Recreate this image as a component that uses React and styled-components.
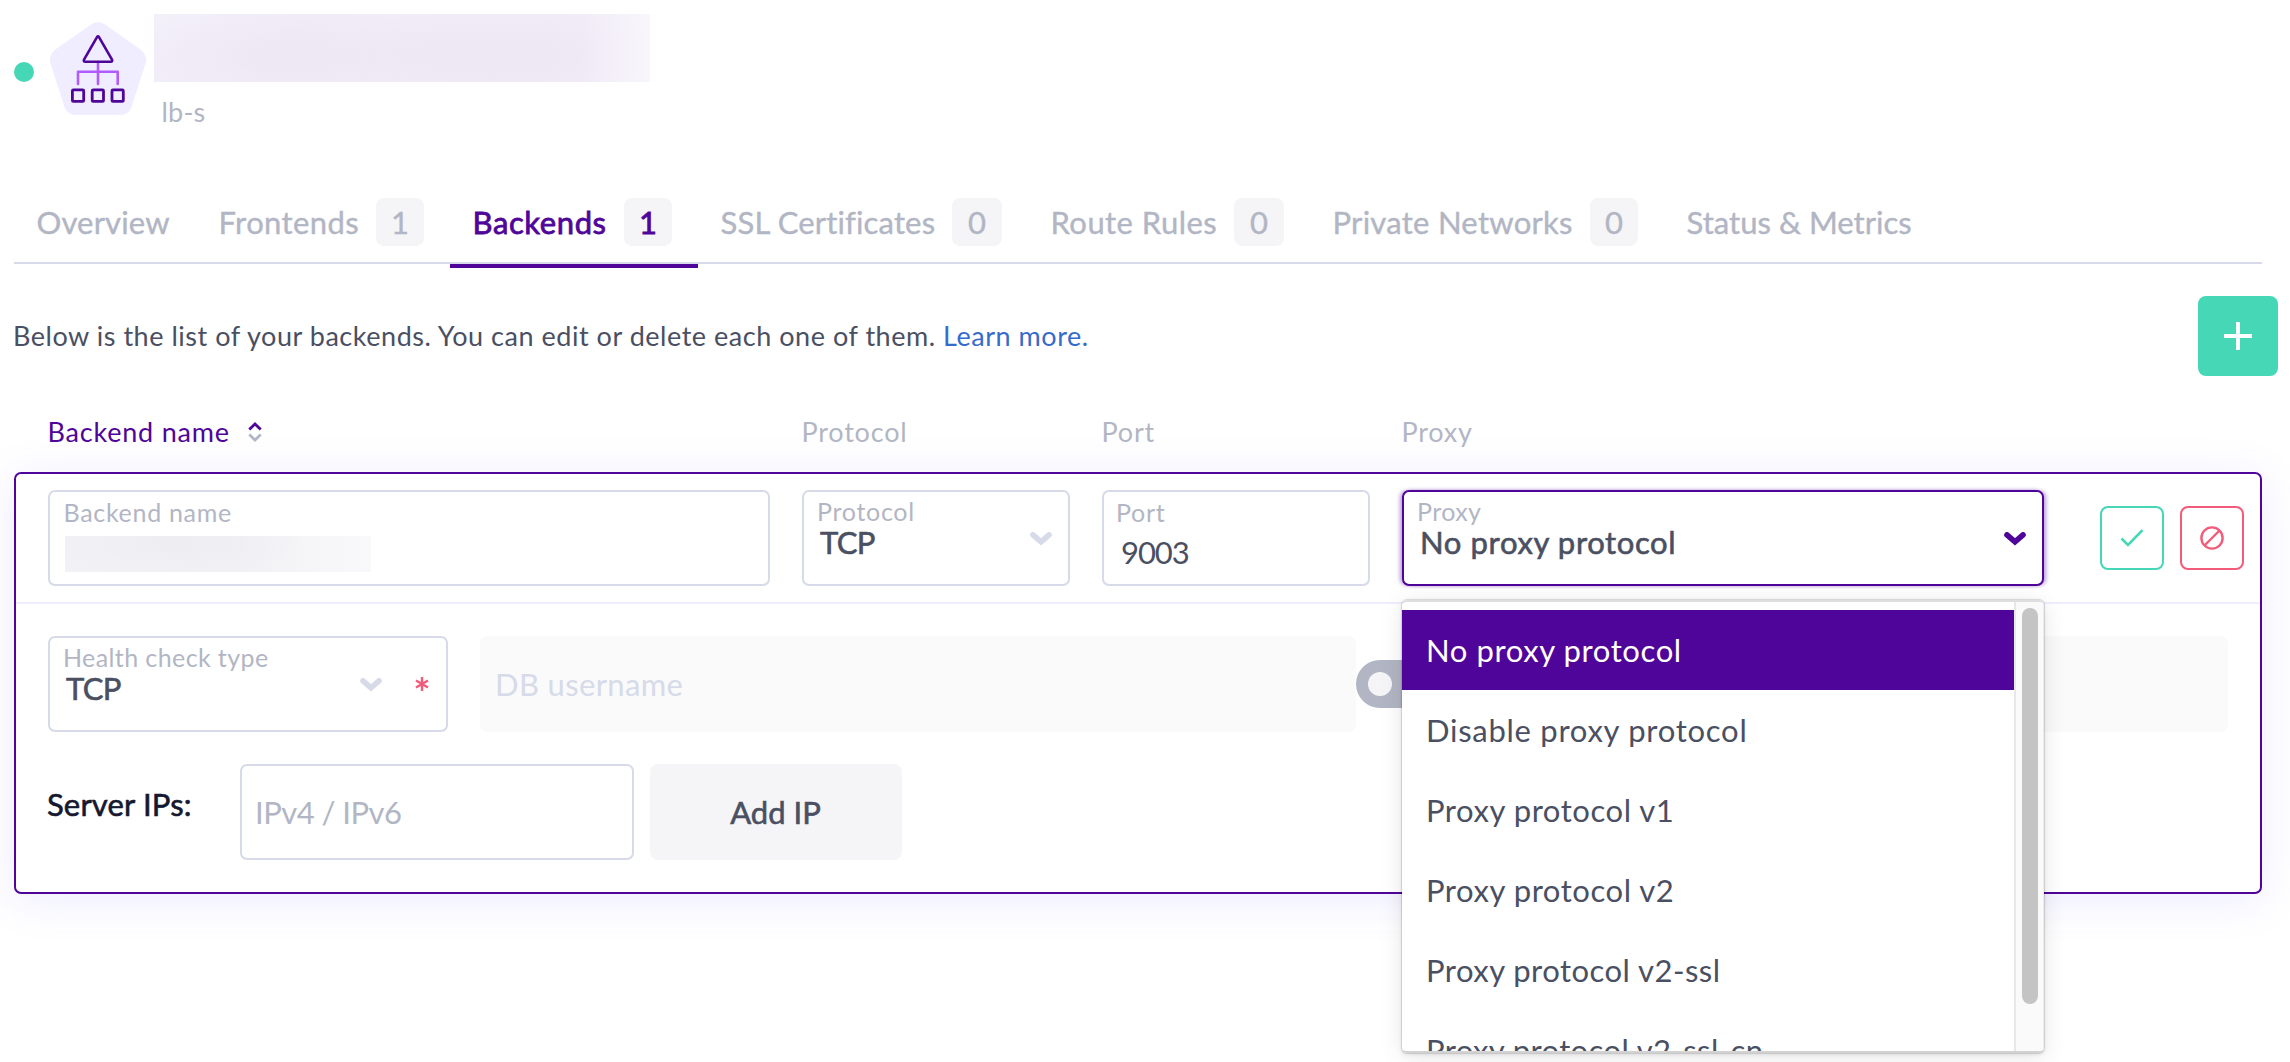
import React from 'react';
import styled, { createGlobalStyle, css } from 'styled-components';

const c = {
  purple: '#4f0599',
  violet: '#b05cff',
  lilac: '#efedff',
  teal: '#46d7b6',
  red: '#f25c7a',
  gray: '#b2b6c4',
  line: '#d6dae9',
  text: '#4a4f62',
  soft: '#f5f5f8',
  faint: '#fafafa',
};

const GlobalStyle = createGlobalStyle`
  *, *::before, *::after { box-sizing: border-box; }
  body {
    margin: 0;
    height: 1062px;
    overflow: hidden;
    background: #fff;
    color: ${c.text};
    font: 31px/34px Lato, "Liberation Sans", sans-serif;
    white-space: nowrap;
  }
`;

const medium = css`
  -webkit-text-stroke: 0.6px currentColor;
`;

const Page = styled.main`
  width: 2290px;
  height: 1062px;
  padding-left: 14px;
  overflow: hidden;
`;

/* ---- header ---- */
const Header = styled.header`
  display: flex;
  align-items: flex-start;
  height: 182px;
  padding-top: 14px;
`;
const StatusDot = styled.span`
  width: 20px;
  height: 20px;
  margin: 48px 16px 0 0;
  border-radius: 50%;
  background: ${c.teal};
`;
const Logo = styled.svg`
  width: 96px;
  height: 94px;
  margin: 8px 8px 0 0;
`;
const Heading = styled.div`
  display: flex;
  flex-direction: column;
`;
const HiddenTitle = styled.div`
  width: 496px;
  height: 68px;
  background:
    linear-gradient(90deg, transparent 86%, rgba(249, 247, 252, 0.8) 99%),
    radial-gradient(ellipse 170px 50px at 28% 62%, #ede7f4, transparent),
    radial-gradient(ellipse 170px 50px at 69% 62%, #ede6f3, transparent),
    linear-gradient(135deg, #f3f0fa, #f1ecf7 30%, #f1ecf7);
`;
const Subtitle = styled.div`
  margin: 13px 0 0 7.5px;
  color: ${c.gray};
  font-size: 27px;
  letter-spacing: 0.2px;
`;

/* ---- tabs ---- */
const Tabs = styled.nav`
  display: flex;
  width: 2248px;
  height: 82px;
  border-bottom: 2px solid ${c.line};
`;
const Tab = styled.div`
  position: relative;
  display: flex;
  align-items: center;
  width: ${(p) => p.$width}px;
  padding: 0 26px 0 22.5px;
  color: ${(p) => (p.$active ? c.purple : c.gray)};
  letter-spacing: ${(p) => p.$track}px;
  -webkit-text-stroke: ${(p) => (p.$active ? 0.8 : 0.4)}px currentColor;
  ${(p) =>
    p.$active &&
    css`
      &::after {
        content: '';
        position: absolute;
        left: 0;
        right: 0;
        bottom: -6px;
        height: 4px;
        background: ${c.purple};
      }
    `}
`;
const Count = styled.span`
  display: flex;
  align-items: center;
  justify-content: center;
  width: ${(p) => (p.$wide ? 50 : 48)}px;
  height: 48px;
  margin-left: auto;
  border-radius: 8px;
  background: ${c.soft};
  letter-spacing: 0;
`;

/* ---- intro ---- */
const Intro = styled.div`
  display: flex;
  align-items: center;
  justify-content: space-between;
  width: 2264px;
  margin-top: 32px;
`;
const IntroText = styled.p`
  margin: 0 0 0 -1px;
  font-size: 27px;
  letter-spacing: 0.53px;
`;
const Link = styled.a`
  color: #366bcc;
`;
const AddButton = styled.button`
  display: flex;
  align-items: center;
  justify-content: center;
  width: 80px;
  height: 80px;
  border: 0;
  border-radius: 8px;
  background: ${c.teal};
`;

/* ---- table ---- */
const HeadRow = styled.div`
  display: flex;
  align-items: center;
  gap: 32px;
  height: 96px;
  padding: 15px 0 0 33.5px;
  font-size: 27px;
  letter-spacing: 0.8px;
`;
const HeadCell = styled.div`
  display: flex;
  align-items: center;
  gap: 18px;
  width: ${(p) => p.$width}px;
  color: ${(p) => (p.$sorted ? c.purple : c.gray)};
`;
const Card = styled.section`
  width: 2248px;
  height: 422px;
  border: 2px solid ${c.purple};
  border-radius: 7px;
  background: #fff;
  box-shadow: 0 6px 44px rgba(110, 100, 255, 0.13);
`;
const MainRow = styled.div`
  display: flex;
  align-items: flex-start;
  gap: 32px;
  height: 130px;
  padding: 16px 16px 0 32px;
  border-bottom: 2px solid ${c.lilac};
`;
const FieldWrap = styled.div`
  position: relative;
  width: ${(p) => p.$width}px;
`;
const Field = styled.div`
  display: flex;
  align-items: center;
  height: 96px;
  padding: 0 ${(p) => p.$right || 16}px 0 ${(p) => p.$left || 13}px;
  border: 2px solid ${(p) => (p.$open ? c.purple : c.line)};
  border-radius: 7px;
  background: #fff;
  box-shadow: ${(p) => (p.$open ? '-3px 0 4px -1px rgba(79,5,153,.4), 3px 0 4px -1px rgba(79,5,153,.4)' : 'none')};
`;
const FieldText = styled.div`
  flex: 1;
  align-self: flex-start;
  padding-top: ${(p) => (p.$input ? 6 : 5)}px;
`;
const Label = styled.div`
  color: ${c.gray};
  font-size: 25px;
  line-height: 28px;
  letter-spacing: ${(p) => p.$track || 0.7}px;
`;
const Value = styled.div`
  padding-left: 3px;
  letter-spacing: ${(p) => p.$track || 0}px;
  ${medium}
`;
const InputValue = styled.div`
  padding: 9px 0 0 5px;
  letter-spacing: -1.1px;
`;
const HiddenValue = styled.div`
  width: 306px;
  height: 36px;
  margin-top: 10px;
  margin-left: 1px;
  background:
    radial-gradient(ellipse 130px 34px at 36% 20%, #eeedf2, transparent),
    linear-gradient(90deg, #f2f1f5, #f1f1f4 55%, #f9f9fb);
`;
const Required = styled.svg`
  width: 14px;
  height: 16px;
  margin-left: 33.5px;
`;
const Actions = styled.div`
  display: flex;
  gap: 16px;
  margin: 16px 0 0 24px;
`;
const IconButton = styled.button`
  display: flex;
  align-items: center;
  justify-content: center;
  width: 64px;
  height: 64px;
  padding: 0;
  border: 2px solid ${(p) => p.$tone};
  border-radius: 8px;
  background: #fff;
  color: ${(p) => p.$tone};
`;

/* ---- dropdown ---- */
const Menu = styled.div`
  position: absolute;
  z-index: 2;
  top: 110px;
  left: 0;
  display: flex;
  width: 642px;
  height: 453px;
  border-top: 2px solid #dedede;
  border-bottom: 2px solid #d2d2d2;
  border-radius: 5px;
  background: #fff;
  overflow: hidden;
`;
const MenuShade = styled.div`
  position: absolute;
  z-index: 1;
  top: 110px;
  left: 0;
  width: 642px;
  height: 453px;
  border-radius: 5px;
  box-shadow: 0 0 0 1px rgba(0, 0, 0, 0.1), 0 4px 24px rgba(0, 0, 0, 0.1), 0 1px 4px rgba(0, 0, 0, 0.12);
`;
const Options = styled.div`
  flex: 1;
  padding-top: 8px;
`;
const Option = styled.div`
  height: 80px;
  padding-left: 24px;
  line-height: 80px;
  letter-spacing: ${(p) => p.$track}px;
  color: ${(p) => (p.$selected ? '#fff' : c.text)};
  background: ${(p) => (p.$selected ? c.purple : '#fff')};
`;
const Scrollbar = styled.div`
  width: 30px;
  padding: 6px 0 0 6px;
  border-left: 2px solid #e8e8e8;
  border-right: 1px solid #ececec;
  background: ${c.faint};
`;
const Thumb = styled.div`
  width: 16px;
  height: 396px;
  border-radius: 8px;
  background: #c4c4c4;
`;

/* ---- details ---- */
const HealthRow = styled.div`
  display: flex;
  align-items: center;
  padding: 32px 32px 0;
`;
const DisabledField = styled.div`
  width: ${(p) => p.$width}px;
  height: 96px;
  margin-left: ${(p) => p.$left}px;
  padding-left: 15px;
  border-radius: 8px;
  background: ${c.faint};
  color: ${c.line};
  line-height: 96px;
  letter-spacing: 0.35px;
`;
const Toggle = styled.div`
  display: flex;
  align-items: center;
  width: 96px;
  height: 48px;
  padding-left: 12px;
  border-radius: 24px;
  background: ${c.gray};
  &::before {
    content: '';
    width: 24px;
    height: 24px;
    border-radius: 50%;
    background: ${c.soft};
  }
`;
const ServerRow = styled.div`
  display: flex;
  align-items: center;
  padding: 32px 32px 0 31px;
`;
const ServerLabel = styled.div`
  width: 193px;
  margin-bottom: 16px;
  color: #151830;
  letter-spacing: 0.15px;
  ${medium}
`;
const IpInput = styled.div`
  width: 394px;
  height: 96px;
  padding-left: 13px;
  border: 2px solid ${c.line};
  border-radius: 7px;
  color: ${c.gray};
  line-height: 92px;
  letter-spacing: -0.55px;
`;
const AddIpButton = styled.div`
  width: 252px;
  height: 96px;
  margin-left: 16px;
  border-radius: 8px;
  background: ${c.soft};
  text-align: center;
  text-indent: -1px;
  line-height: 96px;
  ${medium}
`;

const ChevronSvg = styled.svg`
  width: 22px;
  height: 14px;
  margin-top: 2px;
`;
const Chevron = ({ color = '#d6dae9' }) => (
  <ChevronSvg viewBox="0 0 22 14" fill="none" stroke={color} strokeWidth="5.6" strokeLinecap="round" strokeLinejoin="miter">
    <path d="M3 2.9 11 9.900 19 2.900" />
  </ChevronSvg>
);

const TABS = [
  { name: 'Overview', width: 182, track: 0.15 },
  { name: 'Frontends', width: 254, track: 0.4, count: 1 },
  { name: 'Backends', width: 248, track: 0.6, count: 1, active: true },
  { name: 'SSL Certificates', width: 330, track: 0.15, count: 0, wide: true },
  { name: 'Route Rules', width: 282, track: 0.45, count: 0, wide: true },
  { name: 'Private Networks', width: 354, track: 0.27, count: 0 },
  { name: 'Status & Metrics', width: 280, track: 0.03 },
];

const OPTIONS = [
  ['No proxy protocol', 0.6],
  ['Disable proxy protocol', 0.73],
  ['Proxy protocol v1', 0.55],
  ['Proxy protocol v2', 0.55],
  ['Proxy protocol v2-ssl', 0.47],
  ['Proxy protocol v2-ssl-cn', 0.38],
];

export default function App() {
  return (
    <Page>
      <GlobalStyle />
      <Header>
        <StatusDot />
        <Logo viewBox="0 0 96 94" fill="none" strokeLinejoin="round" strokeLinecap="round">
          <path
            fill="#efedff"
            d="M41 2.5Q48-1.8 55 2.5L90 27Q98 33 95.3 42L81.5 85Q78.5 93 70 93H26Q17.500 93 14.500 85L.7 42Q-2 33 6 27Z"
          />
          <path d="M48 40V62M28 62V49.700H67.700V62" stroke={c.violet} strokeWidth="2.6" />
          <path d="M47 15.200Q48 13.500 49 15.200L62 37.600Q62.800 39.700 60.800 39.700H35.200Q33.200 39.700 34 37.600Z" stroke={c.purple} strokeWidth="2.6" />
          <g stroke={c.purple} strokeWidth="2.800">
            <rect x="22.400" y="67.900" width="11.300" height="11.500" rx="1" />
            <rect x="42.200" y="67.900" width="11.300" height="11.500" rx="1" />
            <rect x="62" y="67.900" width="11.300" height="11.500" rx="1" />
          </g>
        </Logo>
        <Heading>
          <HiddenTitle />
          <Subtitle>lb-s</Subtitle>
        </Heading>
      </Header>

      <Tabs>
        {TABS.map((t) => (
          <Tab key={t.name} $width={t.width} $track={t.track} $active={t.active}>
            {t.name}
            {t.count !== undefined && <Count $wide={t.wide}>{t.count}</Count>}
          </Tab>
        ))}
      </Tabs>

      <Intro>
        <IntroText>
          Below is the list of your backends. You can edit or delete each one of them. <Link>Learn more.</Link>
        </IntroText>
        <AddButton>
          <svg width="28" height="28" stroke="#fff" strokeWidth="4">
            <path d="M14 0V28M0 14H28" />
          </svg>
        </AddButton>
      </Intro>

      <HeadRow>
        <HeadCell $width={722} $sorted>
          Backend name
          <svg width="14" height="20" fill="none" strokeWidth="2.800">
            <path d="M1.300 7.500 7 2 12.700 7.500" stroke={c.purple} />
            <path d="M1.300 12.500 7 18 12.700 12.500" stroke={c.gray} />
          </svg>
        </HeadCell>
        <HeadCell $width={268}>Protocol</HeadCell>
        <HeadCell $width={268}>Port</HeadCell>
        <HeadCell $width={642}>Proxy</HeadCell>
      </HeadRow>

      <Card>
        <MainRow>
          <FieldWrap $width={722}>
            <Field $left={13.5}>
              <FieldText $input>
                <Label>Backend name</Label>
                <HiddenValue />
              </FieldText>
            </Field>
          </FieldWrap>
          <FieldWrap $width={268}>
            <Field>
              <FieldText>
                <Label>Protocol</Label>
                <Value $track={-0.6}>TCP</Value>
              </FieldText>
              <Chevron />
            </Field>
          </FieldWrap>
          <FieldWrap $width={268}>
            <Field $left={12}>
              <FieldText $input>
                <Label>Port</Label>
                <InputValue>9003</InputValue>
              </FieldText>
            </Field>
          </FieldWrap>
          <FieldWrap $width={642}>
            <Field $open>
              <FieldText>
                <Label $track={0.4}>Proxy</Label>
                <Value $track={0.63}>No proxy protocol</Value>
              </FieldText>
              <Chevron color={c.purple} />
            </Field>
            <MenuShade />
            <Menu>
              <Options>
                {OPTIONS.map(([name, track], i) => (
                  <Option key={name} $track={track} $selected={i === 0}>
                    {name}
                  </Option>
                ))}
              </Options>
              <Scrollbar>
                <Thumb />
              </Scrollbar>
            </Menu>
          </FieldWrap>
          <Actions>
            <IconButton $tone={c.teal}>
              <svg width="24" height="20" fill="none" stroke="currentColor" strokeWidth="2.600">
                <path d="M1.500 10.500 8 17 22.500 2.200" />
              </svg>
            </IconButton>
            <IconButton $tone={c.red}>
              <svg width="24" height="24" fill="none" stroke="currentColor" strokeWidth="2.400">
                <circle cx="12" cy="12" r="10.600" />
                <path d="M4.500 19.500 19.500 4.500" />
              </svg>
            </IconButton>
          </Actions>
        </MainRow>

        <HealthRow>
          <FieldWrap $width={400}>
            <Field $right={17}>
              <FieldText>
                <Label $track={0.4}>Health check type</Label>
                <Value $track={-0.6}>TCP</Value>
              </FieldText>
              <Chevron />
              <Required viewBox="0 0 14 16" stroke={c.red} strokeWidth="2.400">
                <path d="M7 1V15M1 4.500 13 11.500M13 4.500 1 11.500" />
              </Required>
            </Field>
          </FieldWrap>
          <DisabledField $width={876} $left={32}>DB username</DisabledField>
          <Toggle />
          <DisabledField $width={744} $left={32} />
        </HealthRow>

        <ServerRow>
          <ServerLabel>Server IPs:</ServerLabel>
          <IpInput>IPv4 / IPv6</IpInput>
          <AddIpButton>Add IP</AddIpButton>
        </ServerRow>
      </Card>
    </Page>
  );
}
